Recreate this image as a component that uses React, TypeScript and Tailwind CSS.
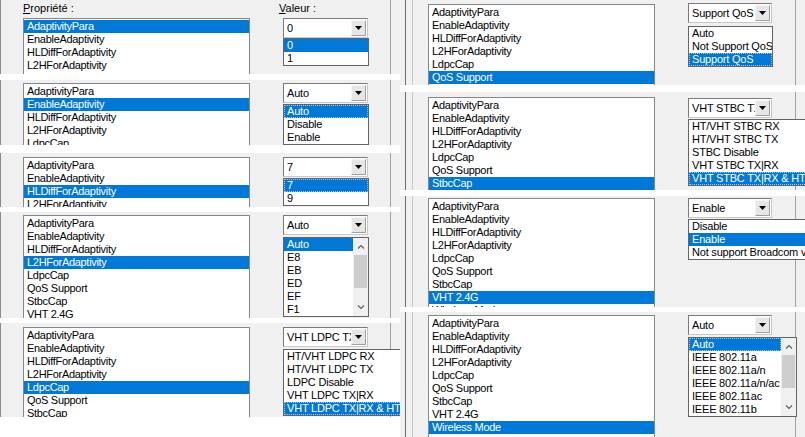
import React from "react";

const PROPS = [
	"AdaptivityPara",
	"EnableAdaptivity",
	"HLDiffForAdaptivity",
	"L2HForAdaptivity",
	"LdpcCap",
	"QoS Support",
	"StbcCap",
	"VHT 2.4G",
	"Wireless Mode",
];

function ListBox({ selected }: { selected: number }) {
	return (
		<div className="w-[227px] h-[140px] shrink-0 bg-white border border-[#828790] pt-px tracking-[-0.3px]">
			{PROPS.map((p, i) => (
				<div
					key={p}
					className={`h-[13px] leading-[13px] px-[3px] whitespace-nowrap ${
						i === selected ? "bg-[#0078d7] text-white" : "text-black"
					}`}
				>
					{p}
				</div>
			))}
		</div>
	);
}

function Arrow() {
	return (
		<svg width="7" height="4" viewBox="0 0 7 4">
			<path d="M0 0h7L3.5 4z" fill="#000" />
		</svg>
	);
}

function Chevron({ up }: { up?: boolean }) {
	return (
		<svg width="8" height="5" viewBox="0 0 8 5">
			<path
				d={up ? "M1 4.5L4 1.5L7 4.5" : "M1 0.5L4 3.5L7 0.5"}
				fill="none"
				stroke="#606060"
				strokeWidth="1.2"
			/>
		</svg>
	);
}

function Combo({ value }: { value: string }) {
	return (
		<div className="h-[20px] w-full flex items-center bg-white border border-t-[#7a7a7a] border-l-[#7a7a7a] border-b-[#c8c8c8] border-r-[#c8c8c8] tracking-[-0.2px]">
			<div className="flex-1 overflow-hidden whitespace-nowrap pl-[3px] leading-[13px]">
				{value}
			</div>
			<div className="w-[15px] h-[16px] mr-px flex items-center justify-center bg-[#e6e6e6] border border-[#f4f4f4] border-b-[#a0a0a0] border-r-[#a0a0a0]">
				<Arrow />
			</div>
		</div>
	);
}

interface DropProps {
	options: string[];
	sel: number;
	width: string;
	focus?: boolean;
	scroll?: boolean;
	gap: string;
}

function Dropdown({ options, sel, width, focus, scroll, gap }: DropProps) {
	return (
		<div
			className={`relative z-10 flex shrink-0 bg-white border border-[#646464] tracking-[-0.2px] ${width} ${gap}`}
		>
			<div className="flex-1 min-w-0 overflow-hidden">
				{options.map((o, i) => (
					<div
						key={o}
						className={`h-[13px] leading-[12px] pl-[3px] whitespace-nowrap ${
							i === sel
								? `bg-[#0078d7] text-white ${focus ? "outline-1 outline-dotted outline-[#9ec8f0] -outline-offset-1" : ""}`
								: "text-black"
						}`}
					>
						{o}
					</div>
				))}
			</div>
			{scroll && (
				<div className="w-[15px] shrink-0 bg-[#f0f0f0] flex flex-col items-center">
					<div className="h-[17px] flex items-center justify-center">
						<Chevron up />
					</div>
					<div className="w-[13px] h-[33px] bg-[#cdcdcd]" />
					<div className="flex-1" />
					<div className="h-[17px] flex items-center justify-center">
						<Chevron />
					</div>
				</div>
			)}
		</div>
	);
}

interface SegProps {
	h: string;
	mt: string;
	top: string;
	ctop: string;
	sel: number;
	value: string;
	options: string[];
	optSel: number;
	ddWidth: string;
	ddGap: string;
	focus?: boolean;
	scroll?: boolean;
	header?: boolean;
	side: "left" | "right";
}

function Segment(p: SegProps) {
	const list = (
		<div className={`shrink-0 ${p.top}`}>
			{p.header && (
				<div className="h-[18px] pt-[2px] leading-[13px]">
					<span className="underline">P</span>ropriété :
				</div>
			)}
			<ListBox selected={p.sel} />
		</div>
	);
	const combo = (
		<div className={`relative z-10 shrink-0 flex flex-col ${p.ctop} ${p.side === "left" ? "w-[85px]" : "w-[84px]"}`}>
			{p.header && (
				<div className="h-[18px] pt-[2px] -ml-[4px] leading-[13px]">
					<span className="underline">V</span>aleur :
				</div>
			)}
			<Combo value={p.value} />
			<Dropdown
				options={p.options}
				sel={p.optSel}
				width={p.ddWidth}
				focus={p.focus}
				scroll={p.scroll}
				gap={p.ddGap}
			/>
		</div>
	);
	if (p.side === "left") {
		return (
			<div className={`flex items-start shrink-0 overflow-hidden bg-[#f0f0f0] ${p.h} ${p.mt}`}>
				<div className="w-px self-stretch shrink-0 bg-[#8a8a8a]" />
				<div className="ml-[22px] shrink-0">{list}</div>
				<div className="ml-[33px] shrink-0">{combo}</div>
				<div className="ml-[22px] w-px self-stretch shrink-0 bg-[#a0a0a0]" />
			</div>
		);
	}
	return (
		<div className={`flex items-start shrink-0 overflow-hidden bg-[#f0f0f0] ${p.h} ${p.mt}`}>
			<div className="ml-[5px] w-px self-stretch shrink-0 bg-[#6e6e6e]" />
			<div className="ml-[6px] w-px self-stretch shrink-0 bg-[#c8c8c8]" />
			<div className="ml-[15px] shrink-0">{list}</div>
			<div className="ml-[33px] shrink-0">{combo}</div>
			<div className="ml-[23px] w-px self-stretch shrink-0 bg-[#a0a0a0]" />
		</div>
	);
}

export default function App() {
	return (
		<div className="w-[805px] h-[437px] flex overflow-hidden bg-white text-[11px] text-black font-['Liberation_Sans',Arial,sans-serif]">
			<div className="w-[400px] shrink-0 flex flex-col overflow-hidden">
				<Segment
					side="left"
					header
					h="h-[74px]"
					mt="mt-0"
					top="mt-0"
					ctop="mt-0"
					sel={0}
					value="0"
					options={["0", "1"]}
					optSel={0}
					ddWidth="w-[86px]"
					ddGap="mt-0"
				/>
				<Segment
					side="left"
					h="h-[65px]"
					mt="mt-[6px]"
					top="mt-[3px]"
					ctop="mt-[3px]"
					sel={1}
					value="Auto"
					options={["Auto", "Disable", "Enable"]}
					optSel={0}
					ddWidth="w-[86px]"
					ddGap="mt-px"
					focus
				/>
				<Segment
					side="left"
					h="h-[54px]"
					mt="mt-[8px]"
					top="mt-[4px]"
					ctop="mt-[4px]"
					sel={2}
					value="7"
					options={["7", "9"]}
					optSel={0}
					ddWidth="w-[86px]"
					ddGap="mt-px"
					focus
				/>
				<Segment
					side="left"
					h="h-[106px]"
					mt="mt-[5px]"
					top="mt-[3px]"
					ctop="mt-[3px]"
					sel={3}
					value="Auto"
					options={["Auto", "E8", "EB", "ED", "EF", "F1"]}
					optSel={0}
					ddWidth="w-[86px]"
					ddGap="mt-[2px]"
					scroll
				/>
				<Segment
					side="left"
					h="h-[94px]"
					mt="mt-[5px]"
					top="mt-[4px]"
					ctop="mt-[4px]"
					sel={4}
					value="VHT LDPC TX|RX & HT"
					options={[
						"HT/VHT LDPC RX",
						"HT/VHT LDPC TX",
						"LDPC Disable",
						"VHT LDPC TX|RX",
						"VHT LDPC TX|RX & HT",
					]}
					optSel={4}
					ddWidth="w-[130px]"
					ddGap="mt-[2px]"
					focus
				/>
			</div>
			<div className="flex-1 flex flex-col overflow-hidden">
				<Segment
					side="right"
					h="h-[85px]"
					mt="mt-0"
					top="mt-[4px]"
					ctop="mt-[3px]"
					sel={5}
					value="Support QoS"
					options={["Auto", "Not Support QoS", "Support QoS"]}
					optSel={2}
					ddWidth="w-[85px]"
					ddGap="mt-[3px]"
					focus
				/>
				<Segment
					side="right"
					h="h-[98px]"
					mt="mt-[7px]"
					top="mt-[5px]"
					ctop="mt-[6px]"
					sel={6}
					value="VHT STBC TX|RX & HT"
					options={[
						"HT/VHT STBC RX",
						"HT/VHT STBC TX",
						"STBC Disable",
						"VHT STBC TX|RX",
						"VHT STBC TX|RX & HT",
					]}
					optSel={4}
					ddWidth="w-[130px]"
					ddGap="mt-px"
					focus
				/>
				<Segment
					side="right"
					h="h-[111px]"
					mt="mt-[6px]"
					top="mt-[2px]"
					ctop="mt-[2px]"
					sel={7}
					value="Enable"
					options={["Disable", "Enable", "Not support Broadcom vht"]}
					optSel={1}
					ddWidth="w-[140px]"
					ddGap="mt-px"
				/>
				<Segment
					side="right"
					h="h-[125px]"
					mt="mt-[5px]"
					top="mt-[3px]"
					ctop="mt-[3px]"
					sel={8}
					value="Auto"
					options={[
						"Auto",
						"IEEE 802.11a",
						"IEEE 802.11a/n",
						"IEEE 802.11a/n/ac",
						"IEEE 802.11ac",
						"IEEE 802.11b",
					]}
					optSel={0}
					ddWidth="w-[109px]"
					ddGap="mt-[2px]"
					scroll
					focus
				/>
			</div>
		</div>
	);
}
